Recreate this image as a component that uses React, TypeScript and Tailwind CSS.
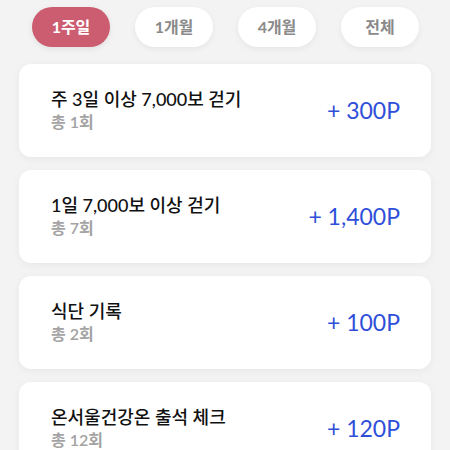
import React from "react";

const tabs = ["1주일", "1개월", "4개월", "전체"];

const items = [
  { title: "주 3일 이상 7,000보 걷기", count: "총 1회", point: "+ 300P" },
  { title: "1일 7,000보 이상 걷기", count: "총 7회", point: "+ 1,400P" },
  { title: "식단 기록", count: "총 2회", point: "+ 100P" },
  { title: "온서울건강온 출석 체크", count: "총 12회", point: "+ 120P" },
];

export default function App() {
  return (
    <div
      className="w-[450px] h-[450px] overflow-hidden bg-[#f3f3f3]"
      style={{ fontFamily: "Lato, 'Noto Sans CJK KR', sans-serif" }}
    >
      {/* Period tabs */}
      <div className="flex gap-[25px] pl-[32px] pt-[7px]">
        {tabs.map((t, i) => (
          <button
            key={t}
            className={
              i === 0
                ? "w-[78px] h-[40px] rounded-full bg-[#cc5d71] text-white text-[16px] font-bold shadow-[0_2px_6px_rgba(0,0,0,0.08)]"
                : "w-[78px] h-[40px] rounded-full bg-white text-[#8a8a8a] text-[16px] font-bold shadow-[0_2px_6px_rgba(0,0,0,0.06)]"
            }
          >
            {t}
          </button>
        ))}
      </div>

      {/* Point list */}
      <div className="flex flex-col gap-[13px] px-[19px] pt-[17px]">
        {items.map((it) => (
          <div
            key={it.title}
            className="h-[93px] shrink-0 rounded-[12px] bg-white shadow-[0_2px_8px_rgba(0,0,0,0.05)] flex items-center justify-between pl-[32px] pr-[31px]"
          >
            <div className="flex flex-col mb-[2px]">
              <span className="text-[18px] leading-[24px] text-[#111] font-medium">{it.title}</span>
              <span className="text-[16px] leading-[22px] text-[#a3a3a3] font-semibold">{it.count}</span>
            </div>
            <span className="text-[23px] text-[#2f4fd9]">{it.point}</span>
          </div>
        ))}
      </div>
    </div>
  );
}
